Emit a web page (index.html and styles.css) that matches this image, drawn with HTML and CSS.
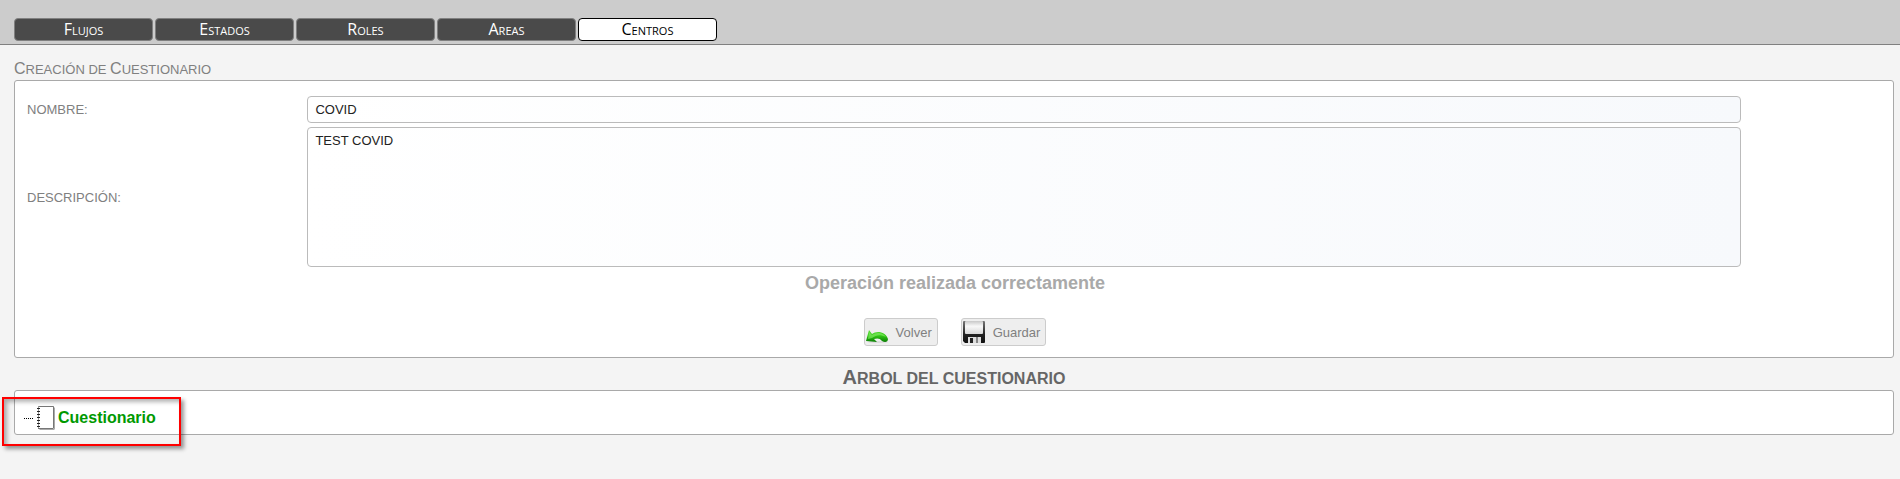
FILE: index.html
```html
<!DOCTYPE html>
<html lang="es">
<head>
  <meta charset="UTF-8">
  <meta name="viewport" content="width=device-width, initial-scale=1.0">
  <title>Creación de Cuestionario</title>
  <link rel="stylesheet" href="styles.css">
</head>
<body>
  <nav class="menu">
    <a href="#flujos">Flujos</a>
    <a href="#estados">Estados</a>
    <a href="#roles">Roles</a>
    <a href="#areas">Areas</a>
    <a href="#centros" class="active">Centros</a>
  </nav>
  <main class="content">
    <h1 class="title"><span class="cap">C</span>reación de <span class="cap">C</span>uestionario</h1>
    <form class="panel">
      <div class="field">
        <label for="nombre">NOMBRE:</label>
        <input type="text" id="nombre" value="COVID">
      </div>
      <div class="field">
        <label for="descripcion">DESCRIPCIÓN:</label>
        <textarea id="descripcion">TEST COVID</textarea>
      </div>
      <p class="message">Operación realizada correctamente</p>
      <div class="buttons">
        <button type="button">
          <svg width="24" height="24" viewBox="0 0 24 24">
            <defs>
              <linearGradient id="green" x1="0" y1="0" x2="0" y2="1">
                <stop offset="0" stop-color="#5fe03a"/>
                <stop offset="0.5" stop-color="#2fc414"/>
                <stop offset="1" stop-color="#0b7d06"/>
              </linearGradient>
            </defs>
            <ellipse cx="12" cy="22" rx="10" ry="1" fill="#dcdcdc"/>
            <path d="M0 21 L3 10 L6 14 C11 10 20 12 22 19 C22 22 19 23 16 21 C14 18 11 18 8 19 L11 22 Z" fill="url(#green)"/>
            <path d="M3 12 L6 15 C10 12 17 12 20 17 C14 14 10 15 6 18 L2 19 Z" fill="#8bee6c" opacity="0.6"/>
          </svg>
          Volver
        </button>
        <button type="button">
          <svg width="24" height="24" viewBox="0 0 24 24">
            <defs>
              <linearGradient id="label" x1="0" y1="0" x2="0" y2="1">
                <stop offset="0" stop-color="#c8c8c8"/>
                <stop offset="0.4" stop-color="#f8f8f8"/>
                <stop offset="1" stop-color="#d8d8d8"/>
              </linearGradient>
              <linearGradient id="disk" x1="0" y1="0" x2="0" y2="1">
                <stop offset="0" stop-color="#777"/>
                <stop offset="0.6" stop-color="#222"/>
                <stop offset="1" stop-color="#111"/>
              </linearGradient>
            </defs>
            <path d="M1 1 H21 Q22 1 22 2 V22 Q22 23 21 23 H2 L0 21 V2 Q0 1 1 1 Z" fill="url(#disk)"/>
            <rect x="2" y="1" width="18" height="13" rx="1" fill="url(#label)"/>
            <rect x="5" y="17" width="13" height="6" fill="#ddd"/>
            <rect x="7" y="18" width="3" height="5" fill="#222"/>
            <rect x="13" y="17" width="2" height="6" fill="#888"/>
          </svg>
          Guardar
        </button>
      </div>
    </form>
    <h2 class="tree-title"><span class="cap">A</span>rbol del cuestionario</h2>
    <div class="panel tree">
      <span class="branch"></span>
      <svg width="20" height="26" viewBox="0 0 20 26">
        <path d="M17 1 L19 3 V24 L18 25 H4 L2 23 H17 Z" fill="#aaa"/>
        <rect x="2" y="1" width="15" height="22" fill="#fff"/>
        <path d="M2 1.5 H17.5 V23 M2 23.5 H17" stroke="#777" fill="none"/>
        <path d="M2.5 1 V23" stroke="#999"/>
        <path d="M2.5 3 V23" stroke="#222" stroke-width="3" stroke-dasharray="1 2"/>
      </svg>
      <a href="#cuestionario">Cuestionario</a>
      <div class="highlight"></div>
    </div>
  </main>
</body>
</html>
```
FILE: styles.css
```css
body {
  margin: 0;
  min-height: 100vh;
  background-color: #f4f4f4;
  color: #808080;
  font-family: "Liberation Sans", Arial, sans-serif;
  font-size: 13px;
}
.menu {
  display: flex;
  gap: 2px;
  padding: 18px 14px 3px;
  background-color: #ccc;
  border-bottom: 1px solid #808080;
}
.menu a {
  box-sizing: border-box;
  width: 139px;
  height: 23px;
  border: 1px solid #808080;
  border-radius: 4px;
  background-color: #4a4a4a;
  color: white;
  font-family: "Open Sans", sans-serif;
  font-size: 16px;
  font-variant: small-caps;
  line-height: 21px;
  text-align: center;
  text-decoration: none;
}
.menu a.active {
  border-color: black;
  background-color: white;
  color: black;
}
.content {
  padding: 14px 6px 0 14px;
}
.title {
  margin: 0;
  font-size: 13px;
  font-weight: normal;
  line-height: 20px;
  text-transform: uppercase;
}
.title .cap {
  font-size: 16px;
}
.panel {
  border: 1px solid #a9a9a9;
  border-radius: 3px;
  background-color: white;
}
form.panel {
  padding: 15px 10px 11px 12px;
}
.field {
  display: grid;
  grid-template-columns: 15% 1fr;
  column-gap: 2px;
  align-items: center;
  margin-bottom: 4px;
}
.field input,
.field textarea {
  box-sizing: border-box;
  width: 91%;
  margin: 0;
  padding: 5px 7px;
  border: 1px solid #bbb;
  border-radius: 4px;
  background: linear-gradient(to right, white, #f7f9fc);
  color: #222;
  font-family: inherit;
  font-size: 13px;
}
.field input {
  height: 27px;
}
.field textarea {
  display: block;
  height: 140px;
  resize: none;
}
.message {
  margin: 0;
  color: #a9a9a9;
  font-size: 18px;
  font-weight: bold;
  line-height: 24px;
  text-align: center;
}
.buttons {
  display: flex;
  justify-content: center;
  gap: 23px;
  margin-top: 23px;
}
.buttons button {
  display: flex;
  align-items: center;
  gap: 6px;
  height: 28px;
  padding: 0 5px 0 1px;
  border: 1px solid #ccc;
  border-radius: 3px;
  background-color: #eee;
  color: #808080;
  font-family: inherit;
  font-size: 13px;
}
.tree-title {
  margin: 0;
  padding-top: 8px;
  color: #666;
  font-size: 16px;
  line-height: 23px;
  text-align: center;
  text-transform: uppercase;
}
.tree-title .cap {
  font-size: 20px;
}
.tree {
  position: relative;
  display: flex;
  align-items: center;
  padding: 14px 9px 3px;
}
.tree svg {
  margin: 0 2px 0 3px;
}
.tree a {
  color: #090;
  font-size: 16px;
  font-weight: bold;
  text-decoration: none;
}
.branch {
  width: 9px;
  border-top: 1px dotted black;
}
/* red frame drawn over the root node */
.highlight {
  position: absolute;
  top: 6px;
  left: -13px;
  width: 175px;
  height: 45px;
  border: 2px solid red;
  box-shadow: 3px 3px 4px rgba(0, 0, 0, 0.4), inset 3px 3px 4px rgba(0, 0, 0, 0.3);
  pointer-events: none;
}
```
